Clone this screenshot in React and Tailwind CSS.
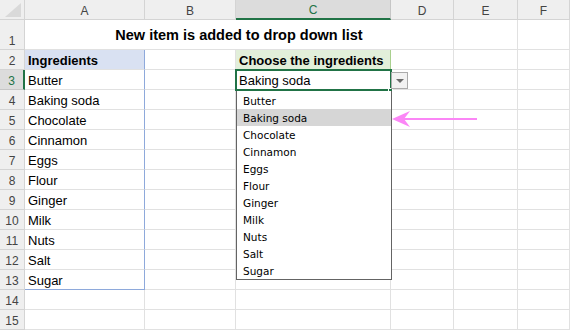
import React from "react";

const items = [
  "Butter",
  "Baking soda",
  "Chocolate",
  "Cinnamon",
  "Eggs",
  "Flour",
  "Ginger",
  "Milk",
  "Nuts",
  "Salt",
  "Sugar",
];

const letters = ["A", "B", "C", "D", "E", "F"];

function ColHead({ label, active }) {
  return (
    <div
      className={
        "flex items-end justify-center border-r border-b text-[12px] leading-[16px] " +
        (active
          ? "bg-[#dcdcdc] border-r-[#c6c6c6] border-b-2 border-b-[#217346] text-[#217346]"
          : "bg-[#efefef] border-r-[#d4d4d4] border-b-[#d4d4d4] text-[#444]")
      }
    >
      {label}
    </div>
  );
}

function RowHead({ n, active }) {
  return (
    <div
      className={
        "flex items-end justify-center border-b text-[12px] leading-[16px] " +
        (active
          ? "bg-[#dcdcdc] border-b-[#c6c6c6] border-r-2 border-r-[#217346] text-[#217346]"
          : "bg-[#efefef] border-r border-r-[#d4d4d4] border-b-[#d4d4d4] text-[#444]")
      }
    >
      {n}
    </div>
  );
}

function Cell({ children, className = "" }) {
  return (
    <div
      className={
        "flex items-end px-[3px] border-r border-b border-[#e1e1e1] text-[13px] leading-[16px] text-black whitespace-nowrap " +
        className
      }
    >
      {children}
    </div>
  );
}

function Arrow() {
  return (
    <svg width="90" height="20" viewBox="0 0 90 20">
      <line x1="12" y1="10" x2="86" y2="10" stroke="#fb86f6" strokeWidth="2" />
      <path d="M1 10 L19 2 L13 10 L19 18 Z" fill="#fb86f6" />
    </svg>
  );
}

export default function App() {
  return (
    <div className="relative w-[570px] h-[331px] bg-white overflow-hidden font-['Liberation_Sans',Arial,sans-serif]">
      <div className="grid grid-cols-[25px_120px_91px_155px_63px_64px_52px] grid-rows-[20px_30px_repeat(14,20px)]">
        {/* header row */}
        <div className="relative bg-[#efefef] border-r border-b border-[#d4d4d4]">
          <svg width="25" height="20" className="absolute left-0 top-0">
            <path d="M5 17 L21 17 L21 3 Z" fill="#d9d9d9" />
          </svg>
        </div>
        {letters.map((l) => (
          <ColHead key={l} label={l} active={l === "C"} />
        ))}

        {/* row 1 */}
        <RowHead n={1} />
        <div className="col-span-4 flex items-center justify-center border-r border-b border-[#e1e1e1] font-bold text-[14.5px] leading-[18px] text-black">
          New item is added to drop down list
        </div>
        <Cell />
        <Cell />

        {/* row 2 */}
        <RowHead n={2} />
        <Cell className="bg-[#d9e1f2] font-bold border-r-[#8ea9db]">Ingredients</Cell>
        <Cell />
        <Cell className="bg-[#e2efda] font-bold border-r-[#a9d08e] border-b-[#a9d08e]">
          Choose the ingredients
        </Cell>
        <Cell />
        <Cell />
        <Cell />

        {/* rows 3-15 */}
        {Array.from({ length: 13 }, (_, i) => {
          const row = i + 3;
          const item = items[i];
          return (
            <React.Fragment key={row}>
              <RowHead n={row} active={row === 3} />
              <Cell
                className={
                  row <= 13
                    ? "border-r-[#8ea9db] " + (row === 13 ? "border-b-[#8ea9db]" : "")
                    : ""
                }
              >
                {item}
              </Cell>
              <Cell />
              <Cell>{row === 3 ? "Baking soda" : ""}</Cell>
              <Cell />
              <Cell />
              <Cell />
            </React.Fragment>
          );
        })}
      </div>

      {/* active cell */}
      <div className="absolute left-[235px] top-[69px] w-[157px] h-[22px] border-2 border-[#217346]" />
      <div className="absolute left-[388px] top-[88px] w-[5px] h-[5px] bg-[#217346] border border-white" />

      {/* drop down button */}
      <div className="absolute left-[391px] top-[72px] w-[17px] h-[17px] flex items-center justify-center bg-[#f2f2f2] border border-[#ababab]">
        <div className="w-0 h-0 border-l-[4px] border-r-[4px] border-t-[4px] border-l-transparent border-r-transparent border-t-[#6b6b6b]" />
      </div>

      {/* drop down list */}
      <div className="absolute left-[236px] top-[91px] w-[156px] pt-[1px] bg-white border-x border-b border-[#646464] font-['DejaVu_Sans',sans-serif] text-[10.5px] text-black">
        {items.map((it) => (
          <div
            key={it}
            className={
              "h-[17px] pl-[6px] leading-[19px] whitespace-nowrap " +
              (it === "Baking soda" ? "bg-[#d6d6d6]" : "")
            }
          >
            {it}
          </div>
        ))}
      </div>

      {/* pointer */}
      <div className="absolute left-[391px] top-[109px]">
        <Arrow />
      </div>
    </div>
  );
}
